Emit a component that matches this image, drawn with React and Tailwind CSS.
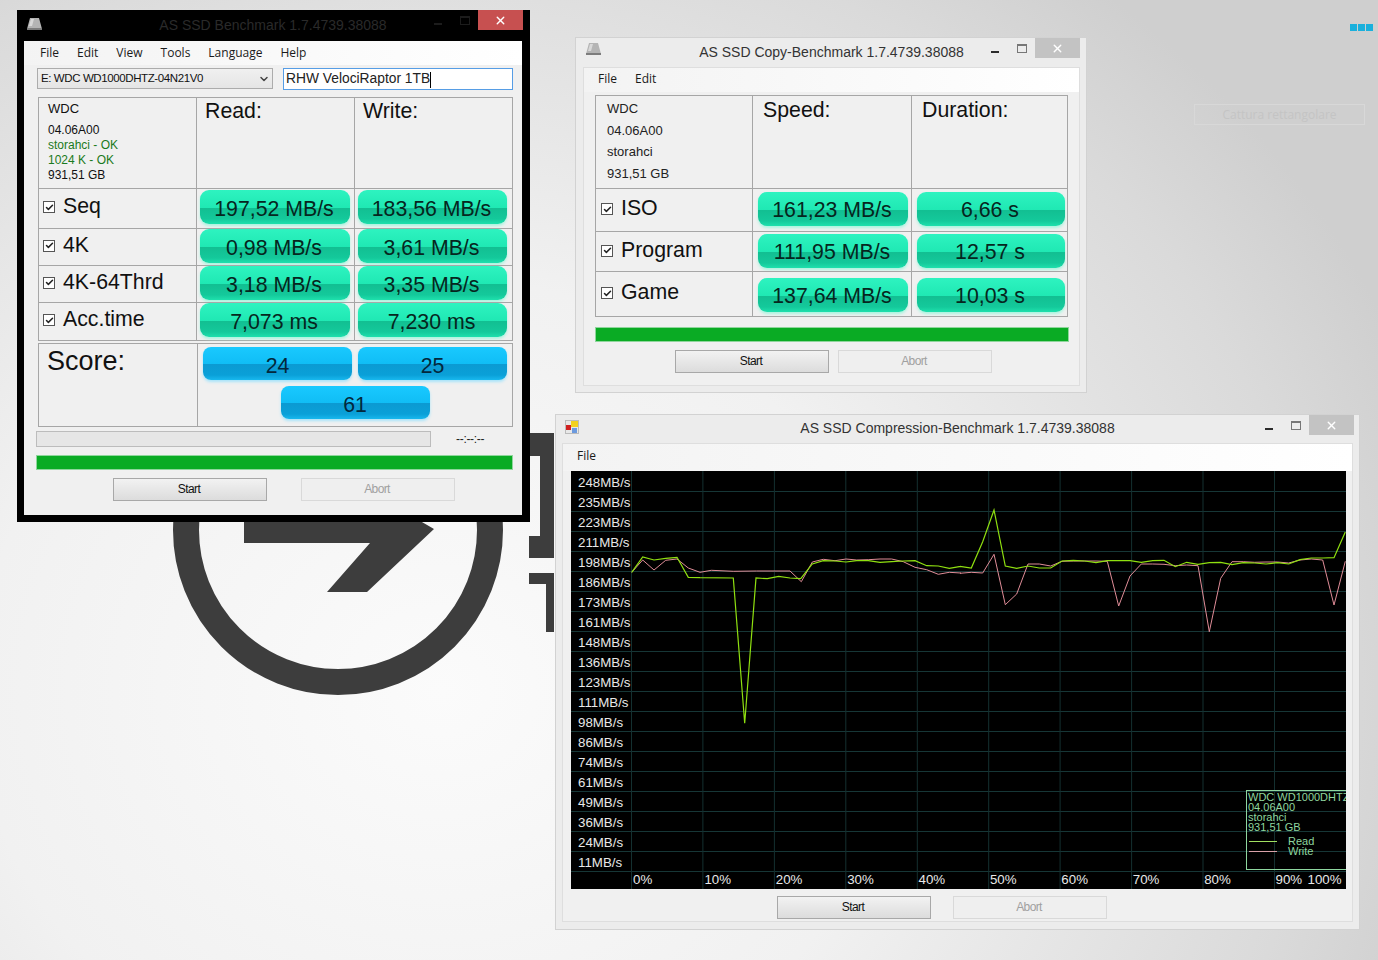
import { Check, ChevronDown, X } from "lucide-react";

const readLeft = [[245,487],[278,441],[312,450],[347,445],[381,442],[415,502],[450,503],[550,504],[584,940],[618,504],[652,506],[686,499],[720,504],[752,506],[787,462],[820,452],[855,453],[888,456],[920,452],[955,452],[990,457],[1025,455],[1060,453],[1095,452],[1130,467],[1165,468],[1198,475],[1232,469]];
const readRight = [[0,469],[34,474],[68,395],[102,300],[136,468],[170,475],[204,468],[238,474],[272,474],[306,453],[340,451],[374,453],[408,458],[442,452],[476,452],[510,452],[544,457],[578,452],[612,451],[646,470],[680,457],[714,463],[748,458],[782,457],[816,464],[850,458],[884,459],[918,462],[952,458],[986,462],[1020,449],[1054,444],[1088,444],[1122,443],[1156,366]];
const writeLeft = [[245,487],[278,450],[312,480],[347,451],[381,447],[415,474],[450,487],[484,481],[550,484],[620,483],[720,483],[754,515],[787,456],[820,448],[855,452],[888,447],[920,450],[955,449],[990,447],[1025,447],[1060,455],[1095,472],[1130,479],[1165,493],[1198,487],[1232,489]];
const writeRight = [[0,490],[34,487],[68,489],[102,433],[136,584],[170,552],[204,462],[238,462],[272,468],[306,454],[340,453],[374,453],[408,453],[442,454],[476,588],[510,498],[544,462],[578,462],[612,463],[646,467],[680,465],[714,467],[748,665],[782,505],[816,455],[850,455],[884,457],[918,456],[952,456],[986,459],[1020,450],[1054,447],[1088,450],[1122,585],[1156,454]];

const toPoints = (left, right) =>
  [
    ...left.map(([x, y]) => [550 + x / 3 - 571, 410 + y / 3 - 471]),
    ...right.map(([x, y]) => [960 + x / 3 - 571, 410 + y / 3 - 471]),
  ]
    .map(([x, y]) => `${x.toFixed(1)},${y.toFixed(1)}`)
    .join(" ");

const mbLabels = ["248", "235", "223", "211", "198", "186", "173", "161", "148", "136", "123", "111", "98", "86", "74", "61", "49", "36", "24", "11"];
const gridX = [60.5, 131.9, 203.4, 274.8, 346.3, 417.7, 489.1, 560.6, 632, 703.5];

const DriveIcon = () => (
  <svg width="17" height="14" viewBox="0 0 17 14">
    <path d="M4 1h9l3 11H1z" fill="#b4b4b4" />
    <path d="M1 11h15v2H1z" fill="#7c7c7c" />
    <path d="M5 2h3L6 9H3z" fill="#d8d8d8" />
  </svg>
);

const FormIcon = () => (
  <svg width="14" height="14" viewBox="0 0 14 14">
    <rect x="0.5" y="0.5" width="13" height="13" fill="#e8e8e8" stroke="#bbbbbb" />
    <rect x="6" y="1" width="7" height="6" fill="#f2d020" />
    <rect x="1" y="5" width="5" height="5" fill="#d02020" />
    <rect x="7" y="8" width="5" height="5" fill="#6c9ade" />
  </svg>
);

const Controls = ({ dark, closeBg, className }) => (
  <div className={`flex justify-end items-start ${className}`}>
    <div className={`mt-[13px] w-2 h-[2px] ${dark ? "bg-[#1c1c1c]" : "bg-[#2b2b2b]"}`} />
    <div className={`ml-[18px] mt-[6px] w-[10px] h-[9px] border border-t-2 ${dark ? "border-[#1c1c1c]" : "border-[#777777]"}`} />
    <div className={`ml-2 w-[45px] h-5 flex items-center justify-center ${closeBg}`}>
      <X size={13} strokeWidth={2.5} color="#ffffff" />
    </div>
  </div>
);

const TitleBar = ({ title, icon, dark, closeBg, height, iconPad, titlePad, controlsClass = "" }) => (
  <div className={`grid grid-cols-[1fr_auto_1fr] ${height}`}>
    <div className={iconPad}>{icon}</div>
    <div className={`${titlePad} text-[14px] leading-[22px] ${dark ? "text-[#2a2a2a]" : "text-[#333333]"}`}>{title}</div>
    <Controls dark={dark} closeBg={closeBg} className={controlsClass} />
  </div>
);

const Menu = ({ items, className }) => (
  <div className={`flex items-center text-[12px] text-[#1a1a1a] bg-[linear-gradient(to_right,#f3f3f3,#ffffff)] font-['Open_Sans',sans-serif] ${className}`}>
    {items.map((item) => (
      <span key={item}>{item}</span>
    ))}
  </div>
);

const Tick = () => (
  <span className="w-3 h-3 shrink-0 flex items-center justify-center border border-[#555555] bg-white">
    <Check size={9} strokeWidth={4} color="#222222" />
  </span>
);

const RowLabel = ({ text, pad }) => (
  <div className={`flex items-center gap-[8px] h-full text-[21.3px] text-[#111111] border-r border-[#a6a6a6] ${pad}`}>
    <Tick />
    <span>{text}</span>
  </div>
);

const Value = ({ text, className = "w-[150px]", textPad = "pt-[4px]" }) => (
  <div className={`${className} ${textPad} h-[34px] pr-[2px] flex items-center justify-center rounded-[9px] text-[21.3px] text-[#06261e] bg-[linear-gradient(to_bottom,#2ef3c0_0%,#1fe8b3_54%,#12bf92_54%,#14c99b_85%,#1ee0ad_100%)] shadow-[0_2px_3px_#a8f5df]`}>
    {text}
  </div>
);

const Score = ({ text }) => (
  <div className="w-[149px] h-[33px] pt-[6px] flex items-center justify-center rounded-[8px] text-[21.3px] text-[#03283c] bg-[linear-gradient(to_bottom,#19c9ff_0%,#10bdf5_52%,#0b9ad2_52%,#0aa0d8_85%,#18b8ee_100%)] shadow-[0_2px_3px_#a8e4fa]">
    {text}
  </div>
);

const Buttons = ({ gap, className }) => (
  <div className={`flex text-[12px] tracking-[-0.6px] ${gap} ${className}`}>
    <div className="w-[154px] h-[23px] pb-[1px] pr-[2px] flex items-center justify-center border border-[#a8a8a8] text-[#111111] bg-[linear-gradient(to_bottom,#f2f2f2,#dcdcdc)]">
      Start
    </div>
    <div className="w-[154px] h-[23px] pb-[1px] pr-[2px] flex items-center justify-center border border-[#d9d9d9] text-[#a0a0a0] bg-[#efefef]">
      Abort
    </div>
  </div>
);

const mainRows = [
  { label: "Seq", read: "197,52 MB/s", write: "183,56 MB/s", row: "h-[40px]", pad: "pt-[1px]" },
  { label: "4K", read: "0,98 MB/s", write: "3,61 MB/s", row: "h-[37px]", pad: "pt-0" },
  { label: "4K-64Thrd", read: "3,18 MB/s", write: "3,35 MB/s", row: "h-[37px]", pad: "pt-0" },
  { label: "Acc.time", read: "7,073 ms", write: "7,230 ms", row: "h-[38px]", pad: "pt-0" },
];

const copyRows = [
  { label: "ISO", speed: "161,23 MB/s", time: "6,66 s", row: "h-[43px]", pad: "pt-[3px]" },
  { label: "Program", speed: "111,95 MB/s", time: "12,57 s", row: "h-[40px]", pad: "pt-[2px]" },
  { label: "Game", speed: "137,64 MB/s", time: "10,03 s", row: "h-[45px]", pad: "pt-[6px]" },
];

const MainWindow = () => (
  <div className="absolute left-[17px] top-[10px] w-[513px] h-[512px] flex flex-col bg-black pl-[7px] pr-[8px] pb-[7px]">
    <TitleBar
      title="AS SSD Benchmark 1.7.4739.38088"
      icon={<DriveIcon />}
      dark
      closeBg="bg-[#c75050]"
      height="h-[31px]"
      iconPad="pl-[2px] pt-[7px]"
      titlePad="pt-[4px]"
      controlsClass="-mr-px"
    />
    <div className="flex-1 bg-[#f0f0f0]">
      <Menu items={["File", "Edit", "View", "Tools", "Language", "Help"]} className="h-6 pl-4 gap-[18px]" />
      <div className="flex mt-[3px] ml-[13px] gap-[10px]">
        <div className="w-[236px] h-[21px] flex items-center justify-between pl-[3px] pr-[2px] border border-[#acacac] text-[11.5px] tracking-[-0.4px] text-[#111111] bg-[linear-gradient(to_bottom,#f0f0f0,#e5e5e5)]">
          <span>E: WDC WD1000DHTZ-04N21V0</span>
          <ChevronDown size={12} strokeWidth={3} color="#444444" />
        </div>
        <div className="w-[230px] h-[22px] pt-[1px] flex items-center pl-[2px] border border-[#569de5] bg-white text-[13.8px] text-[#222222]">
          <span>RHW VelociRaptor 1TB</span>
          <span className="w-px h-4 bg-black" />
        </div>
      </div>
      <div className="ml-[14px] mt-[7px] w-[475px]">
        <div className="border border-[#a6a6a6] grid grid-cols-[158px_158px_1fr]">
          <div className="h-[90px] border-r border-[#a6a6a6] pl-[9px] pt-[2px] text-[12px] leading-[15px] text-[#111111]">
            <div className="text-[13px] leading-[18px] mb-[5px]">WDC</div>
            <div>04.06A00</div>
            <div className="text-[#1a7a20]">storahci - OK</div>
            <div className="text-[#1a7a20]">1024 K - OK</div>
            <div>931,51 GB</div>
          </div>
          <div className="border-r border-[#a6a6a6] pl-2 pt-[2px] text-[21.3px] leading-[22px] text-[#111111]">Read:</div>
          <div className="pl-2 pt-[2px] text-[21.3px] leading-[22px] text-[#111111]">Write:</div>
          {mainRows.map((r) => (
            <div key={r.label} className={`col-span-3 grid grid-cols-[158px_158px_1fr] border-t border-[#a6a6a6] ${r.row}`}>
              <RowLabel text={r.label} pad="pl-[4px] pb-[3px]" />
              <div className={`border-r border-[#a6a6a6] pl-[3px] ${r.pad}`}>
                <Value text={r.read} textPad="pt-[6px]" />
              </div>
              <div className={`pl-[3px] ${r.pad}`}>
                <Value text={r.write} className="w-[149px]" textPad="pt-[6px]" />
              </div>
            </div>
          ))}
        </div>
        <div className="mt-[2px] h-[84px] border border-[#a6a6a6] grid grid-cols-[159px_1fr]">
          <div className="border-r border-[#a6a6a6] pl-2 text-[27px] leading-[34px] text-[#111111]">Score:</div>
          <div className="flex flex-col items-center pt-[3px] gap-[6px]">
            <div className="flex gap-[6px]">
              <Score text="24" />
              <Score text="25" />
            </div>
            <Score text="61" />
          </div>
        </div>
      </div>
      <div className="ml-3 mt-[3px] flex items-center">
        <div className="w-[395px] h-4 border border-[#bcbcbc] bg-[#e6e6e6]" />
        <span className="ml-[25px] text-[12px] tracking-tight text-[#222222]">--:--:--</span>
      </div>
      <div className="ml-3 mt-[7px] w-[477px] h-[15px] bg-[#0aab24] border border-[#8fd69c]" />
      <Buttons gap="gap-[34px]" className="ml-[89px] mt-2" />
    </div>
  </div>
);

const CopyWindow = () => (
  <div className="absolute left-[575px] top-[37px] w-[512px] h-[356px] flex flex-col bg-[#ececec] border border-[#d2d2d2] pl-[7px] pr-[6px] pb-[6px]">
    <TitleBar
      title="AS SSD Copy-Benchmark 1.7.4739.38088"
      icon={<DriveIcon />}
      closeBg="bg-[#c3c3c3]"
      height="h-[29px]"
      iconPad="pl-[2px] pt-[4px]"
      titlePad="pt-[3px]"
    />
    <div className="flex-1 bg-[#f0f0f0] border border-[#dedede]">
      <Menu items={["File", "Edit"]} className="h-6 pb-[2px] pl-[14px] gap-[18px]" />
      <div className="ml-[11px] mt-[3px] w-[473px] border border-[#a6a6a6] grid grid-cols-[157px_159px_1fr]">
        <div className="h-[92px] border-r border-[#a6a6a6] pl-[11px] pt-[2px] text-[13px] leading-[21.5px] text-[#222222]">
          <div>WDC</div>
          <div>04.06A00</div>
          <div>storahci</div>
          <div>931,51 GB</div>
        </div>
        <div className="border-r border-[#a6a6a6] pl-[10px] pt-[2px] text-[21.3px] leading-[24px] text-[#111111]">Speed:</div>
        <div className="pl-[10px] pt-[2px] text-[21.3px] leading-[24px] text-[#111111]">Duration:</div>
        {copyRows.map((r) => (
          <div key={r.label} className={`col-span-3 grid grid-cols-[157px_159px_1fr] border-t border-[#a6a6a6] ${r.row}`}>
            <RowLabel text={r.label} pad="pl-[5px] pb-[2px]" />
            <div className={`border-r border-[#a6a6a6] pl-[5px] ${r.pad}`}>
              <Value text={r.speed} />
            </div>
            <div className={`pl-[5px] ${r.pad}`}>
              <Value text={r.time} className="w-[148px]" />
            </div>
          </div>
        ))}
      </div>
      <div className="ml-[11px] mt-[10px] w-[474px] h-[15px] bg-[#0aab24] border border-[#8fd69c]" />
      <Buttons gap="gap-[9px]" className="ml-[91px] mt-2" />
    </div>
  </div>
);

const Chart = () => (
  <div className="relative ml-2 w-[775px] h-[418px] bg-black overflow-hidden text-[13.3px] text-[#e8e8e8]">
    <svg className="absolute inset-0" width="775" height="418" viewBox="0 0 775 418">
      {mbLabels.map((label, i) => (
        <line key={label} x1="0" x2="775" y1={20.5 + i * 20} y2={20.5 + i * 20} stroke="#163636" />
      ))}
      {gridX.map((x) => (
        <line key={x} x1={x} x2={x} y1="0" y2="418" stroke="#143030" />
      ))}
      <polyline points={toPoints(writeLeft, writeRight)} fill="none" stroke="#e08d98" strokeWidth="1" />
      <polyline points={toPoints(readLeft, readRight)} fill="none" stroke="#8fe010" strokeWidth="1.2" />
    </svg>
    <div className="relative flex flex-col pl-[7px]">
      {mbLabels.map((label) => (
        <div key={label} className="h-5 leading-[23px]">
          {label}MB/s
        </div>
      ))}
    </div>
    <div className="relative flex pl-[62px] h-[18px] leading-[18px]">
      {["0%", "10%", "20%", "30%", "40%", "50%", "60%", "70%", "80%"].map((label) => (
        <span key={label} className="w-[71.4px]">
          {label}
        </span>
      ))}
      <span className="w-[32px]">90%</span>
      <span>100%</span>
    </div>
    <div className="absolute left-[675px] top-[319px] w-[110px] h-[80px] border border-[#8fd69f] pl-[1px] pt-[1px] text-[11px] leading-[10px] text-[#8fd69f]">
      <div className="whitespace-nowrap">WDC WD1000DHTZ</div>
      <div>04.06A00</div>
      <div>storahci</div>
      <div>931,51 GB</div>
      <div className="flex items-center mt-[4px]">
        <span className="w-[28px] h-px ml-[1px] bg-[#a0e060]" />
        <span className="ml-[11px]">Read</span>
      </div>
      <div className="flex items-center">
        <span className="w-[28px] h-px ml-[1px] bg-[#d8a0a8]" />
        <span className="ml-[11px]">Write</span>
      </div>
    </div>
  </div>
);

const CompressionWindow = () => (
  <div className="absolute left-[555px] top-[414px] w-[805px] h-[516px] flex flex-col bg-[#ececec] border border-[#d2d2d2] pl-[6px] pr-[6px] pb-[7px]">
    <TitleBar
      title="AS SSD Compression-Benchmark 1.7.4739.38088"
      icon={<FormIcon />}
      closeBg="bg-[#c3c3c3]"
      height="h-[28px]"
      iconPad="pl-[3px] pt-[5px]"
      titlePad="pt-[2px]"
      controlsClass="-mr-px"
    />
    <div className="flex-1 bg-[#f0f0f0] border border-[#dedede]">
      <Menu items={["File"]} className="h-[27px] pb-[3px] pl-[14px]" />
      <Chart />
      <Buttons gap="gap-[22px]" className="ml-[214px] mt-[7px]" />
    </div>
  </div>
);

const Logo = () => (
  <svg className="absolute left-0 top-0" width="560" height="700" viewBox="0 0 560 700">
    <circle cx="338" cy="530" r="152" fill="none" stroke="#3d3d3d" strokeWidth="26" />
    <path d="M244 500H384L434 529L367 592H327L370 543H244Z" fill="#3d3d3d" />
    <path d="M529 433H554V558H529V536H540V456H529Z" fill="#3d3d3d" />
    <path d="M529 573H554V632H546V584H529Z" fill="#3d3d3d" />
  </svg>
);

const App = () => (
  <div className="relative w-[1378px] h-[960px] overflow-hidden font-['Liberation_Sans',sans-serif] bg-[radial-gradient(ellipse_75%_95%_at_32%_72%,#fbfbfb_0%,#f1f1f1_45%,#dadada_85%,#cfcfcf_100%)]">
    <Logo />
    <div className="absolute left-[1350px] top-[24px] flex gap-[1px]">
      <span className="w-[7px] h-[7px] bg-[#1ab0dc]" />
      <span className="w-[7px] h-[7px] bg-[#1ab0dc]" />
      <span className="w-[7px] h-[7px] bg-[#1ab0dc]" />
    </div>
    <div className="absolute left-[1194px] top-[104px] w-[171px] h-[21px] flex items-center justify-center border border-[#d8d8d8] text-[12px] text-[#c4c4c4] font-['Open_Sans',sans-serif]">
      Cattura rettangolare
    </div>
    <MainWindow />
    <CopyWindow />
    <CompressionWindow />
  </div>
);

export default App;
